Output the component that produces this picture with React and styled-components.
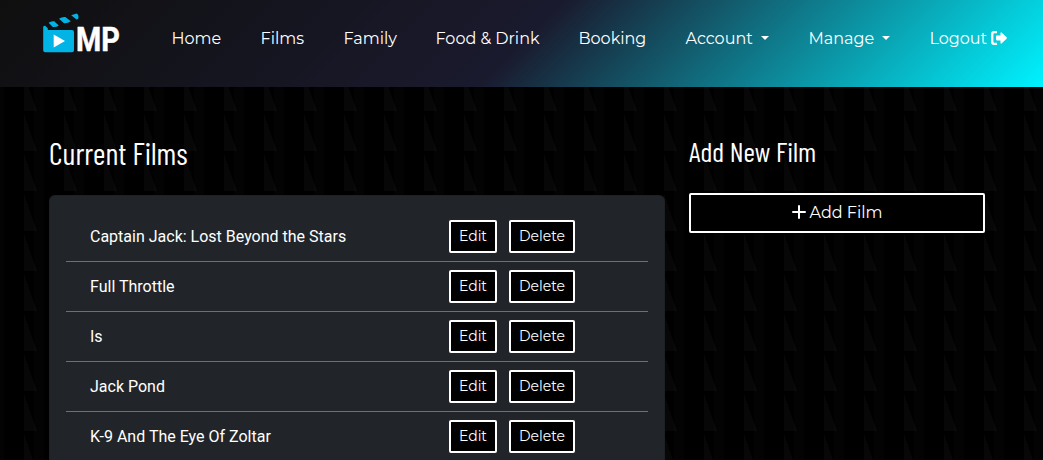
import React from "react";
import styled, { createGlobalStyle } from "styled-components";

const GlobalStyle = createGlobalStyle`
  * { box-sizing: border-box; }
  html, body { margin: 0; height: 100%; overflow: hidden; }
  body {
    color: #fff;
    font-family: Montserrat, Inter, sans-serif;
    font-size: 16px;
    background-color: #000;
    background-image:
      linear-gradient(to right, rgba(255,255,255,0.01) 4px, transparent 4px, transparent 34px, rgba(255,255,255,0.01) 34px),
      linear-gradient(to bottom, transparent 37px, #000 37px),
      conic-gradient(from 0deg at 24px 0, transparent 160.6deg, #070707 161deg, #070707 180deg, transparent 180deg);
    background-size: 40px 40px;
    background-position: 0 0, 0 34px, 0 34px;
  }
`;

const Header = styled.header`
  height: 87px;
  display: flex;
  align-items: flex-start;
  padding: 10px 0 0 42px;
  background: linear-gradient(135deg, #0f0f0f 0%, #1a1a2e 50%, #00f2ff 100%);
`;

const Logo = styled.svg`
  display: block;
  flex: none;
  width: 84px;
  height: 54px;
`;

const Nav = styled.nav`
  display: flex;
  padding: 16px 0 0 45.5px;
`;

const NavLink = styled.a`
  flex: none;
  display: flex;
  align-items: center;
  width: ${(p) => p.$width}px;
  height: 24px;
  white-space: nowrap;
  font-weight: 450;
`;

const Caret = styled.span`
  margin-left: 8px;
  border-top: 4px solid #fff;
  border-left: 4px solid transparent;
  border-right: 4px solid transparent;
`;

const LogoutIcon = styled.svg`
  width: 16px;
  height: 16px;
  margin-left: 4px;
  fill: #fff;
`;

const PlusIcon = styled.svg`
  width: 14px;
  height: 14px;
  fill: none;
  stroke: #fff;
  stroke-width: 2;
  stroke-linecap: round;
`;

const Main = styled.main`
  display: flex;
  align-items: flex-start;
  gap: 24px;
  height: calc(100vh - 87px);
  overflow: hidden;
  padding: 46px 58px 0 49px;
`;

const Column = styled.section`
  width: ${(p) => p.$width}px;
`;

const Heading = styled.h2`
  margin: 0 0 ${(p) => p.$gap}px;
  height: ${(p) => p.$height}px;
  line-height: ${(p) => p.$height}px;
  font-family: "Barlow Condensed", Roboto, sans-serif;
  font-size: ${(p) => p.$size}px;
  font-weight: 400;
  white-space: nowrap;
`;

const Panel = styled.div`
  padding: 16px 16px 0;
  border: 1px solid #1d2024;
  border-bottom: 0;
  border-radius: 6px 6px 0 0;
  background: #212529;
`;

const FilmRow = styled.div`
  display: flex;
  align-items: flex-start;
  height: 50px;
  padding: 8px 0 0 24px;
  border-bottom: 1px solid #6c7075;
`;

const FilmTitle = styled.span`
  width: 359px;
  line-height: 33px;
  font-family: Roboto, sans-serif;
`;

const Button = styled.button`
  display: flex;
  align-items: center;
  justify-content: center;
  gap: 4px;
  width: ${(p) => p.$width};
  height: ${(p) => p.$height}px;
  margin: 0 12px 0 0;
  padding: 0 0 2px;
  border: 2px solid #fff;
  border-radius: 2px;
  background: #000;
  color: #fff;
  font-family: inherit;
  font-weight: 450;
  font-size: ${(p) => p.$size}px;
`;

const films = [
  "Captain Jack: Lost Beyond the Stars",
  "Full Throttle",
  "Is",
  "Jack Pond",
  "K-9 And The Eye Of Zoltar",
];

const links = [
  { text: "Home", width: 89 },
  { text: "Films", width: 83 },
  { text: "Family", width: 92 },
  { text: "Food & Drink", width: 143 },
  { text: "Booking", width: 107 },
  { text: "Account", width: 123, menu: true },
  { text: "Manage", width: 121, menu: true },
  { text: "Logout", width: 80, logout: true },
];

function BrandLogo() {
  return (
    <Logo viewBox="42 10 84 54">
      <g fill="#00b4e6">
        <path d="M43.2 27Q43.2 25.7 45.2 25.7L47.8 28.2V30H72Q74 30 74 32V50.3Q74 52.3 72 52.3H45.2Q43.2 52.3 43.2 50.3Z" />
        <path d="M48.6 22.8Q51 20.8 54.2 21.3L58.8 25.4Q56 27.4 52.8 27Z" />
        <path d="M59 18.8Q62 16.6 65.3 17L70.8 21.2Q67.5 23.5 64 23.2Z" />
        <path d="M71.2 15.2L76.6 13.4Q79.2 14.6 78.2 18.8L76.5 19.6Z" />
      </g>
      <path d="M53.7 34.4L65 41.1L53.7 47.6Z" fill="#fff" />
      <text x="76.1" y="50.7" fill="#fff" stroke="#fff" strokeWidth="0.5" fontFamily="Roboto, sans-serif" fontWeight="700" fontSize="32.5" textLength="43.8" lengthAdjust="spacingAndGlyphs">MP</text>
    </Logo>
  );
}

export default function App() {
  return (
    <>
      <GlobalStyle />
      <Header>
        <BrandLogo />
        <Nav>
          {links.map((l) => (
            <NavLink key={l.text} $width={l.width}>
              {l.text}
              {l.menu && <Caret />}
              {l.logout && (
                <LogoutIcon viewBox="0 0 16 16">
                  <path d="M6 1H3.2Q0 1 0 4.2V11.8Q0 15 3.2 15H6V12.8H3.4Q2.4 12.8 2.4 11.8V4.2Q2.4 3.2 3.4 3.2H6Z" />
                  <path d="M5 6.4Q5 5.6 5.8 5.6H9.5V3.2Q9.6 1.8 10.8 2.7L15.6 7.3Q16.2 8 15.6 8.7L10.8 13.3Q9.6 14.2 9.5 12.8V10.4H5.8Q5 10.4 5 9.6Z" />
                </LogoutIcon>
              )}
            </NavLink>
          ))}
        </Nav>
      </Header>
      <Main>
        <Column $width={616}>
          <Heading $size={30.4} $height={40} $gap={22}>Current Films</Heading>
          <Panel>
            {films.map((f) => (
              <FilmRow key={f}>
                <FilmTitle>{f}</FilmTitle>
                <Button $width="48px" $height={33} $size={14}>Edit</Button>
                <Button $width="66px" $height={33} $size={14}>Delete</Button>
              </FilmRow>
            ))}
          </Panel>
        </Column>
        <Column $width={296}>
          <Heading $size={28} $height={36} $gap={24}>Add New Film</Heading>
          <Button $width="100%" $height={40} $size={16}>
            <PlusIcon viewBox="0 0 14 14">
              <path d="M7 1V13M1 7H13" />
            </PlusIcon>
            Add Film
          </Button>
        </Column>
      </Main>
    </>
  );
}
